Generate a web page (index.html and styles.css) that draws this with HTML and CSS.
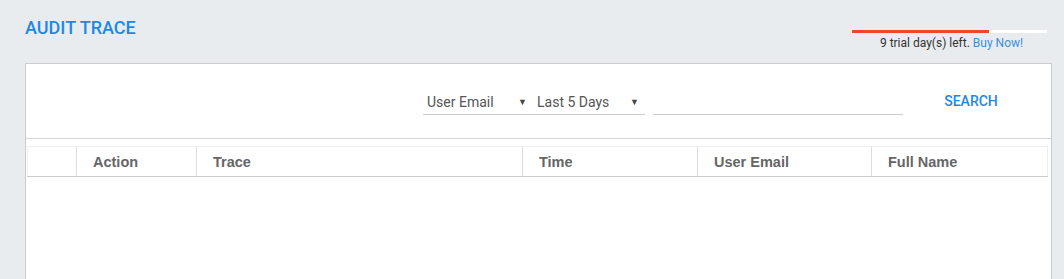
FILE: index.html
```html
<!DOCTYPE html>
<html lang="en">
  <head>
    <meta charset="UTF-8" />
    <meta name="viewport" content="width=device-width, initial-scale=1.0" />
    <title>Audit Trace</title>
    <link rel="stylesheet" href="styles.css">
  </head>

  <body>
    <header class="page-header">
      <h1 class="page-title">AUDIT TRACE</h1>
      <div class="trial">
        <div class="trial-bar">
          <div class="trial-fill" style="width: 70%"></div>
        </div>
        <p class="trial-text">9 trial day(s) left. <a href="#">Buy Now!</a></p>
      </div>
    </header>

    <main class="card">
      <div class="toolbar">
        <div class="selects">
          <div class="select select-field">
            <span>User Email</span>
            <span class="arrow">&#9660;</span>
          </div>
          <div class="select select-range">
            <span>Last 5 Days</span>
            <span class="arrow">&#9660;</span>
          </div>
        </div>
        <input class="search-input" type="text" />
        <button class="search-btn">SEARCH</button>
      </div>

      <table class="trace-table">
        <thead>
          <tr>
            <th class="col-check"></th>
            <th class="col-action">Action</th>
            <th class="col-trace">Trace</th>
            <th class="col-time">Time</th>
            <th class="col-email">User Email</th>
            <th class="col-name">Full Name</th>
          </tr>
        </thead>
        <tbody></tbody>
      </table>
    </main>
  </body>
</html>
```

FILE: styles.css
```css
body {
  font-family: Roboto, "Liberation Sans", sans-serif;
  margin: 0;
  background-color: #e9ecef;
  color: #555;
  height: 279px;
  overflow: hidden;
}

.page-header {
  display: flex;
  justify-content: space-between;
  align-items: flex-start;
  padding: 0 17px 0 25px;
  height: 63px;
}

.page-title {
  margin: 17px 0 0;
  font-size: 18px;
  font-weight: 500;
  color: #1e88e5;
}

.trial {
  margin-top: 30px;
  width: 195px;
  text-align: center;
}

.trial-bar {
  height: 3px;
  background-color: #fff;
}

.trial-fill {
  height: 100%;
  background-color: #f44336;
}

.trial-text {
  margin: 3px 0 0 4px;
  font-size: 12px;
  color: #333;
}

.trial-text a {
  color: #3b8fe0;
  text-decoration: none;
}

.card {
  margin: 0 12px 0 25px;
  background-color: #fff;
  border: 1px solid #ccc;
  border-bottom: none;
  height: 220px;
}

.toolbar {
  display: flex;
  justify-content: flex-end;
  align-items: center;
  height: 74px;
  padding-right: 38px;
  border-bottom: 1px solid #d5d5d5;
}

.selects {
  display: flex;
  border-bottom: 1px solid #ccc;
  margin-top: 2px;
}

.select {
  display: flex;
  justify-content: space-between;
  align-items: center;
  height: 24px;
  font-size: 14px;
  color: #555;
}

.select-field {
  width: 110px;
  padding-left: 4px;
}

.select-range {
  width: 108px;
}

.arrow {
  font-size: 9px;
  color: #444;
}

.select-field .arrow {
  margin-right: 10px;
}

.select-range .arrow {
  margin-right: 6px;
}

.search-input {
  width: 250px;
  margin-left: 8px;
  margin-top: 2px;
  height: 24px;
  padding: 0;
  border: none;
  border-bottom: 1px solid #ccc;
  outline: none;
}

.search-btn {
  width: 84px;
  margin-left: 26px;
  padding: 8px 0;
  background: none;
  border: none;
  font-family: Roboto, "Liberation Sans", sans-serif;
  font-size: 14px;
  font-weight: 500;
  color: #1e88e5;
}

.trace-table {
  margin: 7px 2px 0 1px;
  width: 1021px;
  border-collapse: collapse;
  table-layout: fixed;
}

.trace-table th {
  box-sizing: border-box;
  height: 30px;
  padding: 0 0 0 16px;
  text-align: left;
  font-family: "Liberation Sans", Arial, sans-serif;
  font-size: 14.5px;
  font-weight: bold;
  color: #666;
  border-top: 1px solid #eee;
  border-bottom: 1px solid #ccc;
  border-left: 1px solid #ddd;
}

.trace-table th:first-child {
  border-left: 1px solid #eee;
}

.trace-table th:last-child {
  border-right: 1px solid #eee;
}

.col-check { width: 49px; }
.col-action { width: 120px; }
.col-trace { width: 326px; }
.col-time { width: 175px; }
.col-email { width: 174px; }
```
